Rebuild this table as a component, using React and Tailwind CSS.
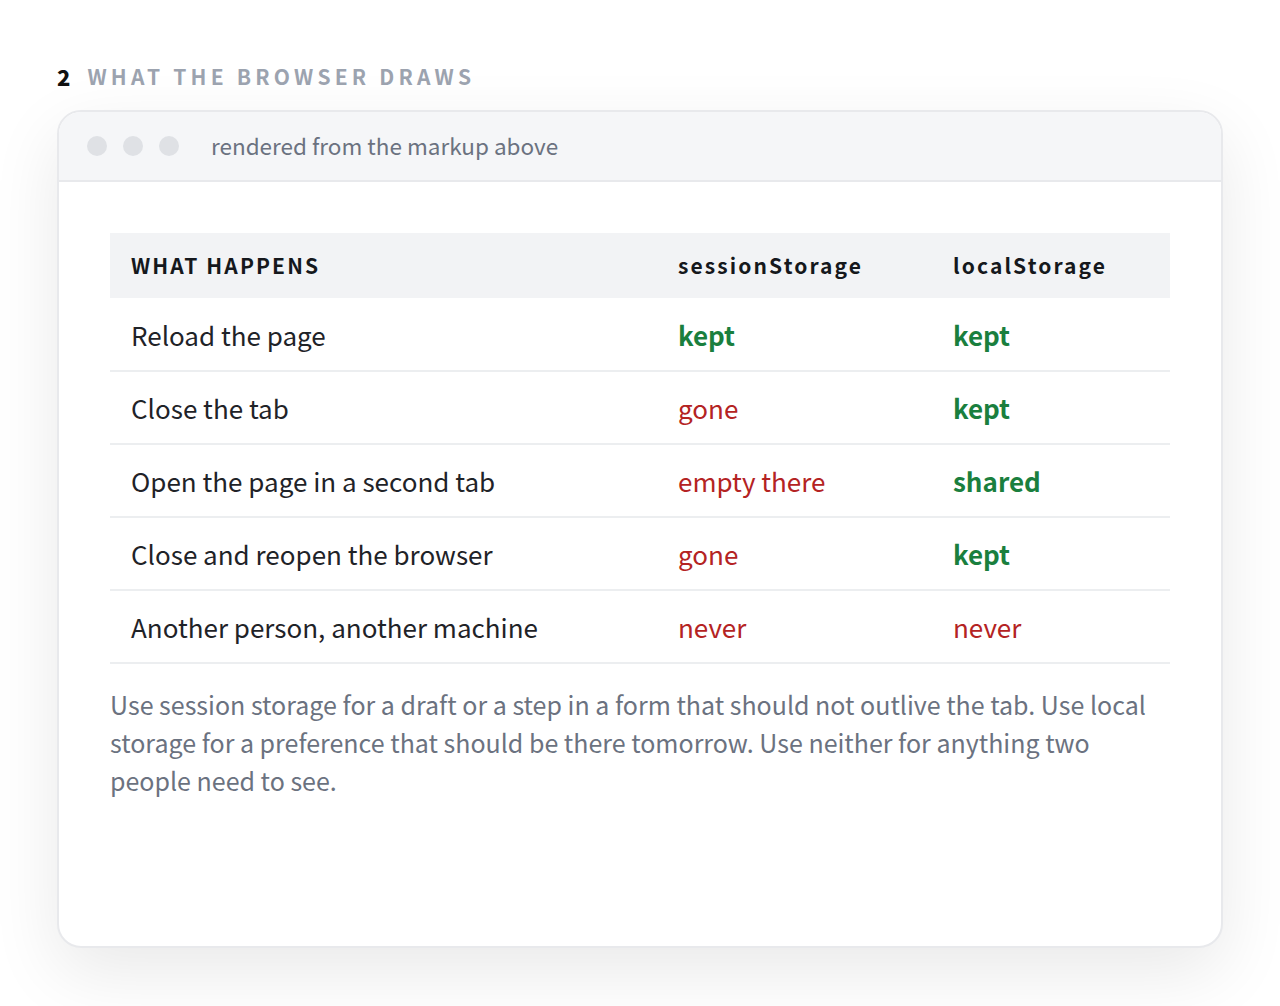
export default function App() {
  const rows = [
    ["Reload the page", ["kept", true], ["kept", true]],
    ["Close the tab", ["gone", false], ["kept", true]],
    ["Open the page in a second tab", ["empty there", false], ["shared", true]],
    ["Close and reopen the browser", ["gone", false], ["kept", true]],
    ["Another person, another machine", ["never", false], ["never", false]],
  ];
  const cell = ([t, ok]) => (
    <td className={`px-0 ${ok ? "font-bold text-[#1a7f3e]" : "text-[#b42323]"}`}>{t}</td>
  );
  return (
    <div
      className="min-h-[1006px] bg-white px-[57px] pt-[58px]"
      style={{ fontFamily: '"Noto Sans CJK KR", "Noto Sans", sans-serif' }}
    >
      <h2 className="flex items-center gap-[17px] text-[21px] font-bold leading-[36px]">
        <span className="text-[22px] font-black text-[#111]">2</span>
        <span className="tracking-[0.2em] text-[#9ca3af]">WHAT THE BROWSER DRAWS</span>
      </h2>
      <div className="mt-[16px] h-[838px] overflow-hidden rounded-[24px] border-2 border-[#e8e9ec] bg-white shadow-[0_24px_70px_rgba(0,0,0,0.09)]">
        <div className="flex h-[70px] items-center border-b-2 border-[#e8e9ec] bg-[#f5f6f8] pl-[28px]">
          <div className="flex gap-[16px]">
            <span className="h-[20px] w-[20px] rounded-full bg-[#dfe1e5]" />
            <span className="h-[20px] w-[20px] rounded-full bg-[#dfe1e5]" />
            <span className="h-[20px] w-[20px] rounded-full bg-[#dfe1e5]" />
          </div>
          <span className="ml-[32px] text-[22.5px] text-[#6b7280]">rendered from the markup above</span>
        </div>
        <div className="px-[51px] pt-[51px]">
          <table className="w-full border-collapse text-left text-[26px] text-[#1f2328]">
            <thead>
              <tr className="h-[65px] bg-[#f2f3f5] text-[21px] font-bold tracking-[0.1em] text-[#15181c]">
                <th className="w-[568px] pl-[21px] font-bold">WHAT HAPPENS</th>
                <th className="w-[275px] font-bold">sessionStorage</th>
                <th className="font-bold">localStorage</th>
              </tr>
            </thead>
            <tbody>
              {rows.map((r, i) => (
                <tr key={i} className="h-[73px] border-b-2 border-[#eceef0]">
                  <td className="pl-[21px]">{r[0]}</td>
                  {cell(r[1])}
                  {cell(r[2])}
                </tr>
              ))}
            </tbody>
          </table>
          <p className="mt-[21px] text-[25px] leading-[38px] text-[#6b7280]">
            Use session storage for a draft or a step in a form that should not outlive the tab. Use local storage for a preference that should be there tomorrow. Use neither for anything two people need to see.
          </p>
        </div>
      </div>
    </div>
  );
}
